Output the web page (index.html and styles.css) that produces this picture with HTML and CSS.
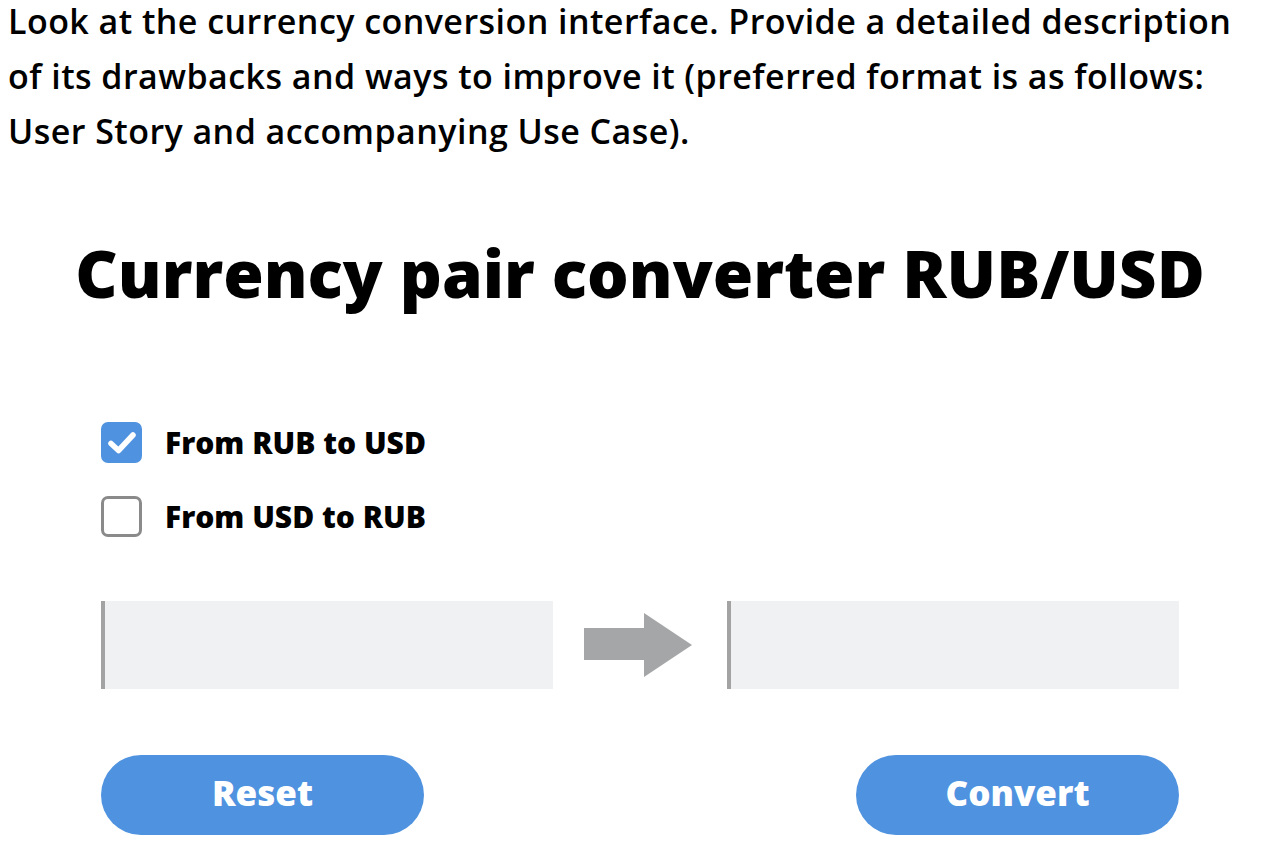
FILE: index.html
```html
<!DOCTYPE html>
<html>
<head>
  <title>Currency pair converter</title>
  <link rel="stylesheet" href="styles.css">
</head>
<body>
  <p class="task">Look at the currency conversion interface. Provide a detailed description<br>
  of its drawbacks and ways to improve it (preferred format is as follows:<br>
  User Story and accompanying Use Case).</p>

  <h1 class="title">Currency pair converter RUB/USD</h1>

  <div class="converter">
    <div class="options">
      <label class="option">
        <span class="box checked">
          <svg width="30" height="26" viewBox="0 0 30 26"><path d="M4 13.5 L11.5 20.5 L26 5" fill="none" stroke="#fff" stroke-width="5.5" stroke-linecap="round" stroke-linejoin="round"/></svg>
        </span>
        From RUB to USD
      </label>
      <label class="option">
        <span class="box"></span>
        From USD to RUB
      </label>
    </div>

    <div class="fields">
      <div class="field"></div>
      <svg class="arrow" width="108" height="64" viewBox="0 0 108 64"><polygon points="0,15 60,15 60,0 108,32 60,64 60,47 0,47" fill="#a5a6a7"/></svg>
      <div class="field"></div>
    </div>

    <div class="actions">
      <button class="btn">Reset</button>
      <button class="btn">Convert</button>
    </div>
  </div>
</body>
</html>
```

FILE: styles.css
```css
body {
  margin: 0;
  padding: 0;
  background-color: #fff;
  color: #000;
  font-family: "Open Sans", "Liberation Sans", sans-serif;
}

.task {
  margin: 0;
  padding: 0 0 0 8px;
  font-size: 34px;
  line-height: 55px;
  font-weight: 600;
  letter-spacing: 0.45px;
  margin-top: -6px;
  white-space: nowrap;
}

.title {
  margin: 74px 0 0 0;
  font-size: 65.5px;
  line-height: 80px;
  font-weight: 800;
  text-align: center;
  white-space: nowrap;
}

.converter {
  width: 1078px;
  margin: 0 auto;
}

.options {
  display: flex;
  flex-direction: column;
  gap: 33px;
  margin-top: 109px;
}

.option {
  display: flex;
  align-items: center;
  gap: 23px;
  font-size: 30px;
  font-weight: 800;
  line-height: 40px;
}

.box {
  width: 35px;
  height: 35px;
  border: 3px solid #8a8a8a;
  border-radius: 7px;
  display: flex;
  align-items: center;
  justify-content: center;
}

.box.checked {
  background-color: #4f92e0;
  border-color: #4f92e0;
}

.fields {
  display: flex;
  align-items: center;
  justify-content: space-between;
  margin-top: 64px;
}

.field {
  width: 448px;
  height: 88px;
  background-color: #f0f1f3;
  border-left: 4px solid #a3a3a3;
}

.arrow {
  margin-left: -4px;
}

.actions {
  display: flex;
  justify-content: space-between;
  margin-top: 66px;
}

.btn {
  width: 323px;
  height: 80px;
  padding: 0 0 6px 0;
  border: none;
  border-radius: 40px;
  background-color: #4f92e0;
  color: #fff;
  font-family: "Open Sans", "Liberation Sans", sans-serif;
  font-size: 35px;
  font-weight: 800;
  cursor: pointer;
}
```
